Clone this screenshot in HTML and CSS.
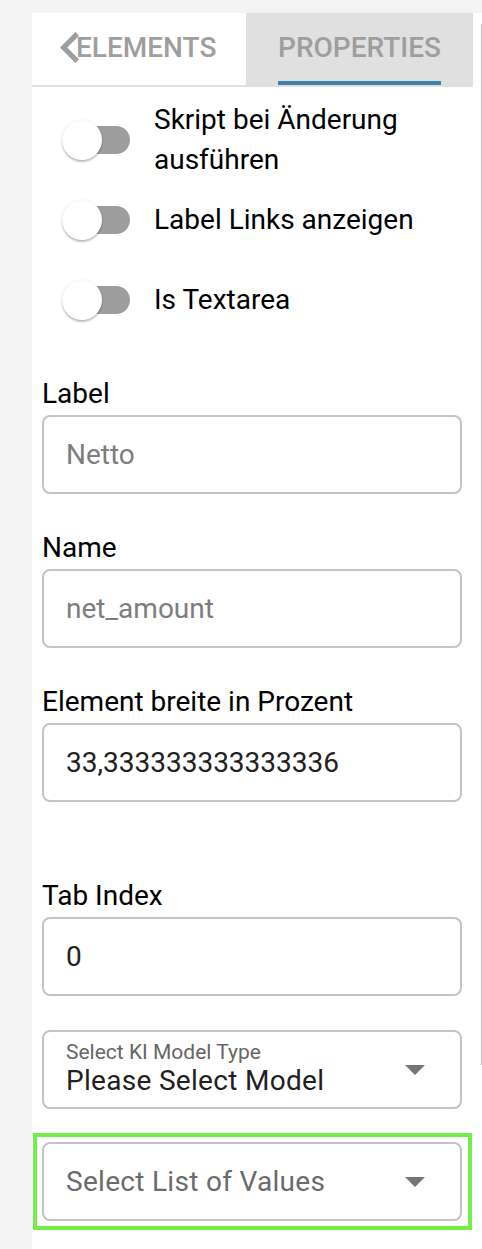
FILE: index.html
```html
<!DOCTYPE html>
<html lang="de">
<head>
<meta charset="utf-8">
<title>Properties</title>
<link rel="stylesheet" href="styles.css">
</head>
<body>
<div class="panel">
  <div class="col">
    <div class="tabs">
      <div class="tab tab-elements">
        <span class="tab-inner">
          <svg class="chev" viewBox="8 6 7.41 12" width="19" height="31" aria-hidden="true"><path d="M15.41 7.41 14 6l-6 6 6 6 1.41-1.41L10.83 12z" fill="#9e9e9e"/></svg>
          <span class="tab-text tab-text-el">ELEMENTS</span>
        </span>
      </div>
      <div class="tab tab-props">
        <span class="tab-inner active"><span class="tab-text">PROPERTIES</span></span>
      </div>
    </div>

    <div class="content">
      <div class="toggles">
        <div class="toggle-row">
          <span class="switch"><span class="track"></span><span class="knob"></span></span>
          <span class="toggle-text">Skript bei Änderung ausführen</span>
        </div>
        <div class="toggle-row">
          <span class="switch"><span class="track"></span><span class="knob"></span></span>
          <span class="toggle-text">Label Links anzeigen</span>
        </div>
        <div class="toggle-row">
          <span class="switch"><span class="track"></span><span class="knob"></span></span>
          <span class="toggle-text">Is Textarea</span>
        </div>
      </div>

      <div class="field">
        <div class="label">Label</div>
        <div class="input placeholder">Netto</div>
      </div>
      <div class="field">
        <div class="label">Name</div>
        <div class="input placeholder">net_amount</div>
      </div>
      <div class="field">
        <div class="label">Element breite in Prozent</div>
        <div class="input">33,333333333333336</div>
      </div>
      <div class="spacer"></div>
      <div class="field">
        <div class="label">Tab Index</div>
        <div class="input">0</div>
      </div>

      <div class="select select-ki">
        <div class="select-stack">
          <span class="select-caption">Select KI Model Type</span>
          <span class="select-value">Please Select Model</span>
        </div>
        <span class="caret"></span>
      </div>

      <div class="highlight">
        <div class="select select-lov">
          <span class="select-placeholder">Select List of Values</span>
          <span class="caret"></span>
        </div>
      </div>
    </div>
  </div>
  <div class="scrollbar"></div>
</div>
</body>
</html>
```

FILE: styles.css
```css
html, body {
  margin: 0;
  padding: 0;
}
body {
  background: #f3f3f3;
  font-family: Roboto, "Liberation Sans", Arial, sans-serif;
  color: #000;
}
.panel {
  margin: 13px 0 0 32px;
  width: 450px;
  min-height: 1236px;
  background: #fff;
  display: flex;
  align-items: flex-start;
}
.col {
  width: 441px;
  flex: none;
}
.scrollbar {
  flex: none;
  width: 1px;
  height: 1041px;
  margin: 11px 0 0 8px;
  background: #c4c4c4;
}

/* tabs */
.tabs {
  display: flex;
  height: 72px;
  border-bottom: 2px solid #e0e0e0;
}
.tab {
  display: flex;
  align-items: stretch;
}
.tab-elements {
  width: 214px;
  background: #fff;
  padding-left: 28px;
  box-sizing: border-box;
}
.tab-props {
  width: 227px;
  background: #e0e0e0;
  justify-content: center;
}
.tab-inner {
  display: flex;
  align-items: center;
  border-bottom: 4px solid transparent;
}
.tab-inner.active {
  border-bottom-color: #3c84a8;
}
.chev {
  display: block;
  flex: none;
}
.tab-text {
  font-size: 28px;
  font-weight: 500;
  color: #9e9e9e;
  letter-spacing: 0;
  line-height: 33px;
}
.tab-text-el {
  margin-left: -3px;
}

/* content */
.content {
  padding: 0 11px 0 10px;
}
.toggles {
  margin-top: 13px;
}
.toggle-row {
  display: flex;
  align-items: center;
  min-height: 80px;
  padding-left: 20px;
}
.switch {
  position: relative;
  flex: none;
  width: 68px;
  height: 40px;
  display: flex;
  align-items: center;
}
.track {
  display: block;
  margin-left: 4px;
  width: 64px;
  height: 28px;
  border-radius: 14px;
  background: #9e9e9e;
}
.knob {
  position: absolute;
  left: 0;
  top: 0;
  width: 40px;
  height: 40px;
  border-radius: 50%;
  background: #fff;
  box-shadow: 0 2px 2px rgba(0,0,0,0.24), 0 0 2px rgba(0,0,0,0.12);
}
.toggle-text {
  margin-left: 24px;
  font-size: 28px;
  line-height: 40px;
  color: #000;
}

.field {
  margin-top: 37px;
}
.label {
  font-size: 28px;
  line-height: 33px;
  margin-bottom: 5px;
  color: #000;
}
.input {
  box-sizing: border-box;
  height: 79px;
  border: 2px solid #c4c4c4;
  border-radius: 8px;
  padding: 0 22px;
  display: flex;
  align-items: center;
  font-size: 28px;
  color: #212121;
}
.input.placeholder {
  color: #7d7d7d;
}
.spacer {
  height: 40px;
}

.select {
  box-sizing: border-box;
  height: 79px;
  border: 2px solid #c4c4c4;
  border-radius: 8px;
  padding: 0 35px 0 22px;
  display: flex;
  align-items: center;
  justify-content: space-between;
}
.select-ki {
  margin-top: 34px;
  align-items: flex-start;
  padding-top: 8px;
}
.select-ki .caret {
  margin-top: 25px;
}
.select-stack {
  display: flex;
  flex-direction: column;
}
.select-caption {
  font-size: 21px;
  line-height: 24px;
  color: #666;
}
.select-value {
  font-size: 28px;
  line-height: 33px;
  color: #212121;
  letter-spacing: 0.3px;
}
.select-placeholder {
  font-size: 28px;
  color: #6b6b6b;
  letter-spacing: 0.3px;
}
.caret {
  flex: none;
  width: 0;
  height: 0;
  border-left: 10px solid transparent;
  border-right: 10px solid transparent;
  border-top: 10px solid #757575;
}
.highlight {
  margin: 24px -10px 0 -9px;
  border: 4px solid #72ee4a;
  padding: 5px 6px 5px 5px;
}
```
